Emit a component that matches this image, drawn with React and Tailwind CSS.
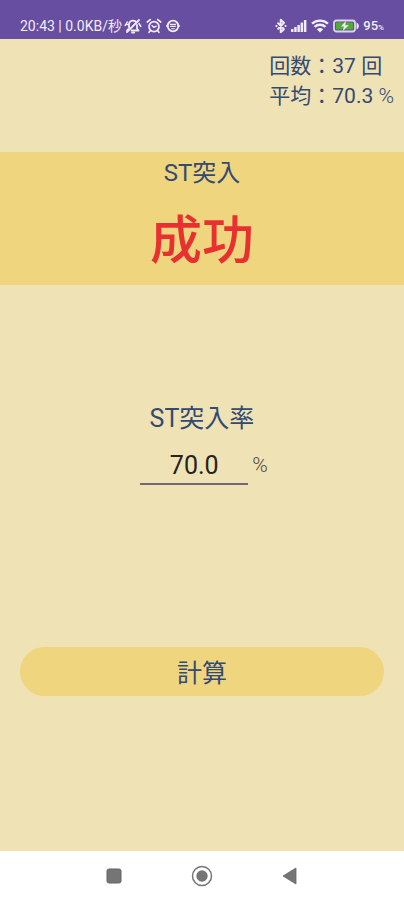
import { useState } from 'react';

function BellOffIcon() {
  return (
    <svg width="18" height="16" viewBox="0 0 18 16" fill="none" stroke="currentColor" strokeWidth="1.8" strokeLinecap="round" strokeLinejoin="round">
      <path d="M5 9.500V6.300C5 4 6.800 2.600 9 2.600c1 0 1.900.3 2.600.9M13 7v3.500l1.500 2H7.500M3 12.500l1-1.200M8 14.600h2.200" />
      <path d="M3 14 15 2" />
      <path d="M1.200 7.500 3.200 4M4.500 6.500H1.500M16.800 8.500 15 5.500" strokeWidth="1.500" />
    </svg>
  );
}

function AlarmIcon() {
  return (
    <svg width="16" height="16" viewBox="0 0 16 16" fill="none" stroke="currentColor" strokeWidth="1.7" strokeLinecap="round" strokeLinejoin="round">
      <circle cx="8" cy="8.600" r="5" />
      <path d="M1.300 4 4.300 1.600M14.700 4l-3-2.400M4.300 12.800 3 14.300M11.700 12.800l1.300 1.500" />
      <path d="M6 7.600 8 9.400l2.200-1.200" strokeWidth="1.400" />
    </svg>
  );
}

function FaceIcon() {
  return (
    <svg width="14" height="14" viewBox="0 0 14 14" fill="none" stroke="currentColor">
      <circle cx="7" cy="7" r="5.300" strokeWidth="1.800" />
      <path d="M0 7h2.500M11.500 7H14" strokeWidth="1.600" />
      <path d="M4 5.400h6M4.200 7.300h5.600" strokeWidth="1.300" />
      <path d="M5.300 9.700h3.400" strokeWidth="1" />
    </svg>
  );
}

function BluetoothIcon() {
  return (
    <svg width="12" height="16" viewBox="0 0 12 16" fill="none" stroke="currentColor" strokeWidth="1.900" strokeLinejoin="round">
      <path d="M2.500 4.700 9 11.200l-3.300 3V1.800l3.300 3-6.500 6.500" />
      <path d="M.6 8h1.800M9.600 8h1.800" />
    </svg>
  );
}

function SignalIcon() {
  return (
    <svg width="16" height="12" viewBox="0 0 16 12" fill="currentColor">
      <rect x="0" y="9" width="2.500" height="3" rx=".5" />
      <rect x="3.200" y="7" width="2.500" height="5" rx=".5" />
      <rect x="6.400" y="5" width="2.500" height="7" rx=".5" />
      <rect x="9.600" y="2.500" width="2.500" height="9.500" rx=".5" />
      <rect x="12.900" y="0" width="2.500" height="12" rx=".5" />
    </svg>
  );
}

function WifiIcon() {
  return (
    <svg width="18" height="14" viewBox="0 0 18 14" fill="none" stroke="currentColor" strokeWidth="2.400">
      <path d="M1 4.700C5.400.6 12.600.6 17 4.700" />
      <path d="M3.600 7.800c3-2.800 7.800-2.800 10.800 0" />
      <path d="M5.800 10.200c1.900-1.700 4.500-1.700 6.400 0L9 13.500z" fill="currentColor" stroke="none" />
    </svg>
  );
}

function BatteryIcon() {
  return (
    <svg width="26" height="14" viewBox="0 0 26 14">
      <rect x="1" y="1.500" width="21" height="11" rx="2.500" fill="none" stroke="currentColor" strokeWidth="1.800" opacity=".85" />
      <path d="M23.500 3.500c1.600.8 2.300 2 2.300 3.500s-.7 2.700-2.300 3.500z" fill="currentColor" />
      <rect x="3" y="3.500" width="17" height="7" rx="1" fill="#4fae32" />
      <path d="M12.800 2 8 7.600h3L9.800 12l6-5.700h-3.500z" fill="currentColor" />
    </svg>
  );
}

function StatusBar() {
  return (
    <header className="flex h-[39px] items-end justify-between bg-[#674ea1] px-5 pb-[3px] text-[#f1ecf8]">
      <div className="flex h-5 items-center gap-[2px]">
        <span className="text-[14px] whitespace-nowrap">20:43 | 0.0KB/秒</span>
        <div className="flex items-center gap-1">
          <BellOffIcon />
          <AlarmIcon />
          <FaceIcon />
        </div>
      </div>
      <div className="flex h-5 items-center gap-1">
        <BluetoothIcon />
        <SignalIcon />
        <WifiIcon />
        <BatteryIcon />
        <span className="text-[13px] font-medium">
          95<span className="text-[8px]">%</span>
        </span>
      </div>
    </header>
  );
}

function NavBar() {
  return (
    <nav className="flex h-[49px] items-center justify-center gap-16 bg-white text-[#757575]">
      <button type="button" aria-label="履歴">
        <svg width="24" height="24" viewBox="0 0 24 24">
          <rect x="5" y="5" width="14" height="14" rx="2" fill="currentColor" stroke="#646464" />
        </svg>
      </button>
      <button type="button" aria-label="ホーム">
        <svg width="24" height="24" viewBox="0 0 24 24">
          <circle cx="12" cy="12" r="9.500" fill="none" stroke="currentColor" strokeWidth="1.500" />
          <circle cx="12" cy="12" r="5.700" fill="currentColor" />
        </svg>
      </button>
      <button type="button" aria-label="戻る">
        <svg width="24" height="24" viewBox="0 0 24 24">
          <path d="M18 4v16L5 12z" fill="currentColor" stroke="#646464" strokeWidth=".8" strokeLinejoin="round" />
        </svg>
      </button>
    </nav>
  );
}

export default function App() {
  const [rate, setRate] = useState('70.0');

  return (
    <div className="flex min-h-screen flex-col bg-[#efe2b5] font-['Roboto','Noto_Sans_CJK_JP',sans-serif] text-[#334a73]">
      <StatusBar />

      <main className="flex flex-1 flex-col">
        <div className="flex justify-end px-[10px] pt-3 text-[21px] leading-[30px]">
          <div>
            <p>回数：37 回</p>
            <p>平均：70.3 <span className="font-light">%</span></p>
          </div>
        </div>

        <section className="mt-[41px] bg-[#f0d57f] text-center">
          <h1 className="text-[24px] leading-[42px]">ST突入</h1>
          <p className="pt-1 text-[52px] leading-[87px] font-medium text-[#e83030]">成功</p>
        </section>

        <div className="mt-[114px] flex flex-col items-center">
          <label htmlFor="rate" className="text-[25px] leading-[40px]">ST突入率</label>
          <div className="flex items-center gap-1 pl-1">
            <input
              id="rate"
              type="text"
              inputMode="decimal"
              value={rate}
              onChange={(e) => setRate(e.target.value)}
              className="h-[46px] w-[108px] border-b-2 border-[#71687a] bg-transparent pt-2 text-center text-[25px] text-[#25221f] outline-none"
            />
            <span className="pt-2 text-[21px] font-light text-[#4f4a46]">%</span>
          </div>
        </div>

        <div className="mt-[162px] px-5">
          <button type="button" className="h-[49px] w-full rounded-full bg-[#f0d57f] pt-1 text-[25px]">
            計算
          </button>
        </div>
      </main>

      <NavBar />
    </div>
  );
}
